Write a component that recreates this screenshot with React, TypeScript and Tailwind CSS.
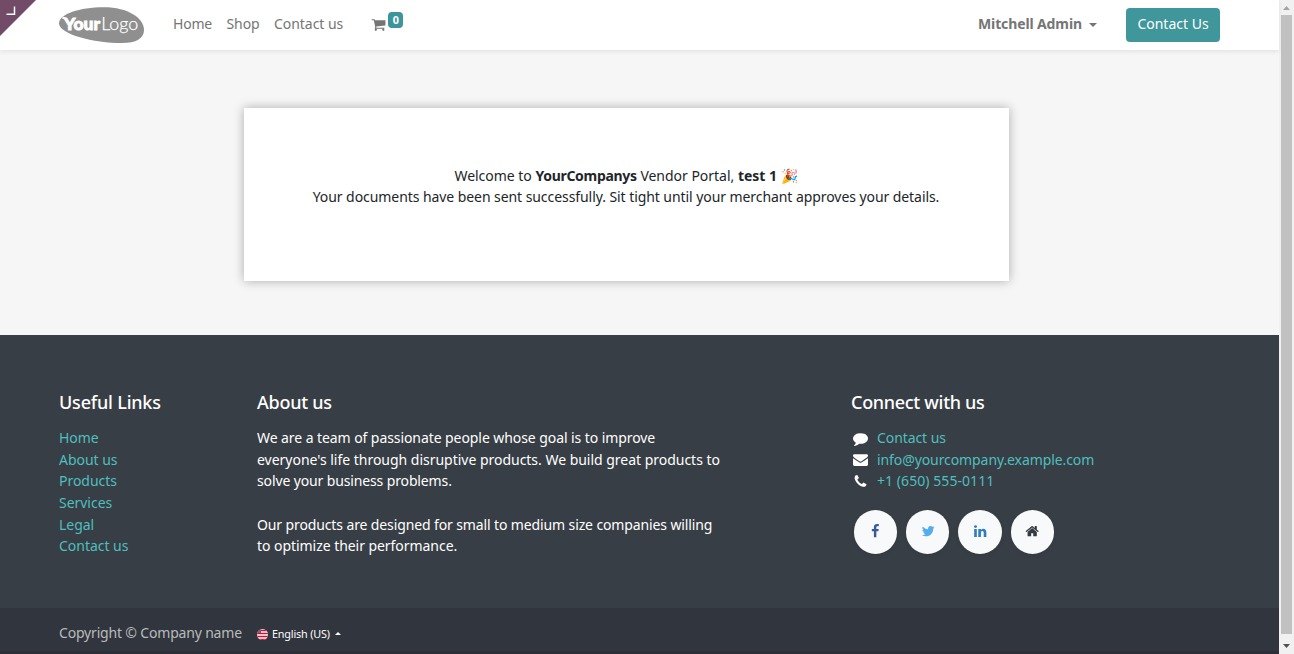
import type { ReactNode } from "react";

const ICONS = {
  cart: "M704 1536q0 52-38 90t-90 38-90-38-38-90 38-90 90-38 90 38 38 90zm896 0q0 52-38 90t-90 38-90-38-38-90 38-90 90-38 90 38 38 90zm128-1088v512q0 24-16.5 42.5t-40.5 21.5l-1044 122q13 60 13 70 0 16-24 64h920q26 0 45 19t19 45-19 45-45 19h-1024q-26 0-45-19t-19-45q0-11 8-31.5t16-36 21.5-40 15.5-29.5l-177-823h-204q-26 0-45-19t-19-45 19-45 45-19h256q16 0 28.5 6.5t19.5 15.5 13 24.5 8 26 5.5 29.5 4.5 26h1201q26 0 45 19t19 45z",
  comment: "M1792 896q0 174-120 321.5t-326 233-450 85.5q-70 0-145-8-198 175-460 242-49 14-114 22-17 2-30.5-9t-17.5-29v-1q-3-4-.5-12t2-10 4.5-9.5l6-9 7-8.5 8-9q7-8 31-34.5t34.5-38 31-39.5 32.5-51 27-59 26-76q-157-89-247.5-220t-90.5-281q0-130 71-248.5t191-204.5 286-136.5 348-50.5q244 0 450 85.5t326 233 120 321.5z",
  envelope: "M1792 710v794q0 66-47 113t-113 47h-1472q-66 0-113-47t-47-113v-794q44 49 101 87 362 246 497 345 57 42 92.5 65.5t94.5 48 110 24.5h2q51 0 110-24.5t94.5-48 92.5-65.5q170-123 498-345 57-39 100-87zm0-294q0 79-49 151t-122 123q-376 261-468 325-10 7-42.5 31t-54 38.5-52 32.5-57.5 27-50 9h-2q-23 0-50-9t-57.5-27-52-32.5-54-38.5-42.5-31q-91-64-262-182.5t-205-142.5q-62-42-117-115.5t-55-136.5q0-78 41.5-130t118.5-52h1472q65 0 112.5 47t47.5 113z",
  phone: "M1600 1240q0 27-10 70.5t-21 68.5q-21 50-122 106-94 51-186 51-27 0-53-3.5t-57.5-12.5-47-14.5-55.5-20.5-49-18q-98-35-175-83-127-79-264-216t-216-264q-48-77-83-175-3-9-18-49t-20.5-55.5-14.5-47-12.5-57.5-3.5-53q0-92 51-186 56-101 106-122 25-11 68.5-21t70.5-10q14 0 21 3 18 6 53 76 11 19 30 54t35 63.5 31 53.5q3 4 17.5 25t21.5 35.5 7 28.5q0 20-28.5 50t-62 55-62 53-28.5 46q0 9 5 22.5t8.5 20.5 14 24 11.5 19q76 137 174 235t235 174q2 1 19 11.5t24 14 20.5 8.5 22.5 5q18 0 46-28.5t53-62 55-62 50-28.5q14 0 28.5 7t35.5 21.5 25 17.5q25 15 53.5 31t63.5 35 54 30q70 35 76 53 3 7 3 21z",
  facebook: "M1343 12v264h-157q-86 0-116 36t-30 108v189h293l-39 296h-254v759h-306v-759h-255v-296h255v-218q0-186 104-288.5t277-102.5q147 0 228 12z",
  twitter: "M1684 408q-67 98-162 167 1 14 1 42 0 130-38 259.5t-115.5 248.5-184.5 210.5-258 146-323 54.5q-271 0-496-145 35 4 78 4 225 0 401-138-105-2-188-64.5t-114-159.5q33 5 61 5 43 0 85-11-112-23-185.5-111.5t-73.5-205.5v-4q68 38 146 41-66-44-105-115t-39-154q0-88 44-163 121 149 294.5 238.5t371.5 99.5q-8-38-8-74 0-134 94.5-228.5t228.5-94.5q140 0 236 102 109-21 205-78-37 115-142 178 93-10 186-50z",
  linkedin: "M477 625v991h-330v-991h330zm21-306q1 73-50.5 122t-135.5 49h-2q-82 0-132-49t-50-122q0-74 51.5-122.5t134.5-48.5 133 48.5 51 122.5zm1166 729v568h-329v-530q0-105-40.5-164.5t-126.5-59.5q-63 0-105.5 34.5t-63.5 85.5q-11 30-11 81v553h-329q2-399 2-647t-1-296l-1-48h329v144h-2q20-32 41-56t56.5-52 87-43.5 114.5-15.5q171 0 275 113.5t104 332.5z",
  home: "M1472 992v480q0 26-19 45t-45 19h-384v-384h-256v384h-384q-26 0-45-19t-19-45v-480q0-1 .5-3t.5-3l575-474 575 474q1 2 1 6zm223-69l-62 74q-8 9-21 11h-3q-13 0-21-7l-692-577-692 577q-12 8-24 7-13-2-21-11l-62-74q-8-10-7-23.5t11-21.5l719-599q32-26 76-26t76 26l244 204v-195q0-14 9-23t23-9h192q14 0 23 9t9 23v408l219 182q10 8 11 21.5t-7 23.5z",
};

function Icon({ name, className }: { name: keyof typeof ICONS; className: string }) {
  return (
    <svg viewBox="0 0 1792 1792" fill="currentColor" className={className}>
      <path d={ICONS[name]} />
    </svg>
  );
}

function Logo() {
  return (
    <svg width="86" height="37" viewBox="0 0 86 37" className="block shrink-0">
      <path d="M0 16C.5 7 20 .2 45 .2 69 .2 85 11 85 23c0 8.5-8 13-22 13C34 36-.5 27 0 16z" fill="#8f8f8f" />
      <path d="M3.5 10.5l4 1.5" stroke="#fff" strokeWidth="2" />
      <text x="5" y="22.8" textLength="36" lengthAdjust="spacingAndGlyphs" fill="#fff" stroke="#fff" strokeWidth=".9" className="font-['Lato'] text-[17.5px] font-black">Your</text>
      <text x="42.2" y="22.8" textLength="37" lengthAdjust="spacingAndGlyphs" fill="#fff" stroke="#fff" strokeWidth=".25" className="font-['Lato'] text-[17.5px] font-light">Logo</text>
    </svg>
  );
}

function Social({ children }: { children: ReactNode }) {
  return (
    <a className="flex size-[43.2px] items-center justify-center rounded-full bg-[#f8f9fa] pb-[2px] shadow-[0_2px_4px_rgba(0,0,0,0.08)]">
      {children}
    </a>
  );
}

const LINKS = ["Home", "About us", "Products", "Services", "Legal", "Contact us"];

export default function App() {
  return (
    <div className="flex h-[654px] w-[1294px] overflow-hidden bg-[#f6f6f6] font-['Noto_Sans',sans-serif] text-[14px] leading-[21.6px] whitespace-nowrap">
      <div className="relative flex w-[1279px] flex-col">
        <header className="z-10 flex h-[50px] shrink-0 items-center bg-white pl-[59px] text-[#757575] shadow-[0_2px_4px_rgba(0,0,0,0.075)]">
          <Logo />
          <nav className="-mt-[2px] ml-[28px] flex items-center">
            <a className="w-[53.5px] tracking-[-0.2px]">Home</a>
            <a className="w-[47.5px] tracking-[-0.1px]">Shop</a>
            <a className="w-[97px] tracking-[-0.05px]">Contact us</a>
            <Icon name="cart" className="size-[15px]" />
            <span className="mb-[8px] ml-[2.4px] flex h-[16px] w-[15px] items-center justify-center rounded-[4px] bg-[#3d959b] text-[10.8px] leading-none font-bold text-white">0</span>
          </nav>
          <div className="-mt-[2px] ml-auto flex items-center font-bold">
            <span className="w-[111px] tracking-[-0.12px]">Mitchell Admin</span>
            <svg width="8" height="4" className="mt-[1px]"><path d="M0 0h8l-4 4z" fill="#757575" /></svg>
          </div>
          <a className="mr-[59px] ml-[29px] flex h-[34px] w-[94px] items-center justify-center rounded-[4px] bg-[#3f969b] pb-[2px] text-white">Contact Us</a>
        </header>
        <svg width="37" height="37" className="absolute top-0 left-0 z-20">
          <path d="M0 0h36L0 36z" fill="#714b67" />
          <path d="M6.5 14.2h8V6.5" fill="none" stroke="#fff" strokeWidth="1.5" />
        </svg>

        <main className="flex h-[285px] shrink-0 pt-[58px] pl-[244px]">
          <section className="h-[173px] w-[765px] bg-white pt-[56.6px] text-center text-[#212529] shadow-[0_0_10px_rgba(0,0,0,0.3)]">
            <p className="pr-[1px] tracking-[-0.02px]">Welcome to <b className="tracking-[-0.3px]">YourCompanys</b> Vendor Portal, <b>test 1</b> 🎉</p>
            <p className="pr-[1px] tracking-[-0.07px]">Your documents have been sent successfully. Sit tight until your merchant approves your details.</p>
          </section>
        </main>

        <footer className="flex h-[273px] shrink-0 bg-[#383e45] pt-[57px] pl-[59px] text-white">
          <div className="w-[198px]">
            <h5 className="mb-[13.7px] text-[18px] font-medium tracking-[-0.2px]">Useful Links</h5>
            <ul className="text-[#4fbfbf]">
              {LINKS.map((l) => <li key={l} className="tracking-[-0.03px]">{l}</li>)}
            </ul>
          </div>
          <div className="w-[594px]">
            <h5 className="mb-[13.7px] text-[18px] font-medium tracking-[-0.25px]">About us</h5>
            <p className="tracking-[-0.075px]">We are a team of passionate people whose goal is to improve</p>
            <p className="tracking-[-0.02px]">everyone's life through disruptive products. We build great products to</p>
            <p className="tracking-[-0.13px]">solve your business problems.</p>
            <p className="mt-[21.6px] tracking-[-0.12px]">Our products are designed for small to medium size companies willing</p>
            <p className="tracking-[-0.05px]">to optimize their performance.</p>
          </div>
          <div>
            <h5 className="mb-[13.7px] text-[18px] font-medium tracking-[-0.3px]">Connect with us</h5>
            <ul className="text-[#4fbfbf]">
              <li className="flex items-center tracking-[-0.08px]"><Icon name="comment" className="mr-[9px] ml-[2px] size-[15px] text-white" />Contact us</li>
              <li className="flex items-center tracking-[-0.09px]"><Icon name="envelope" className="mr-[9px] ml-[2px] size-[15px] text-white" />info@yourcompany.example.com</li>
              <li className="flex items-center tracking-[0.06px]"><Icon name="phone" className="mr-[9px] ml-[2px] size-[15px] text-white" />+1 (650) 555-0111</li>
            </ul>
            <div className="mt-[18.3px] ml-[3px] flex gap-[9px]">
              <Social><Icon name="facebook" className="size-[14.4px] text-[#3b5998]" /></Social>
              <Social><Icon name="twitter" className="size-[14.4px] text-[#55acee]" /></Social>
              <Social><Icon name="linkedin" className="size-[14.4px] text-[#2f7dc0]" /></Social>
              <Social><Icon name="home" className="size-[14.4px] text-[#343a40]" /></Social>
            </div>
          </div>
        </footer>

        <div className="flex h-[46px] shrink-0 items-center border-b-[3px] border-[#2c2f38] bg-[#31353d] pt-[6px] pl-[59px]">
          <span className="w-[198px] tracking-[-0.18px] text-[#b9bbbe]">Copyright © Company name</span>
          <svg width="11" height="11" viewBox="0 0 11 11" className="mt-[3px] mr-[4px]">
            <clipPath id="flag"><circle cx="5.5" cy="5.5" r="5.5" /></clipPath>
            <g clipPath="url(#flag)">
              <path fill="#fff" d="M0 0h11v11H0z" />
              <path d="M0 1.5h11M0 4.5h11M0 7.5h11M0 10.5h11" stroke="#d0102e" strokeWidth="1.5" />
              <path fill="#6c6580" d="M0 0h4v4H0z" />
            </g>
          </svg>
          <span className="mt-[2px] w-[63px] text-[10.8px] tracking-[-0.17px] text-white">English (US)</span>
          <svg width="6" height="3" className="mt-[1px]"><path d="M0 3h6L3 0z" fill="#fff" /></svg>
        </div>
      </div>

      <div className="flex w-[15px] flex-col items-center justify-between bg-[#f1f1f1]">
        <svg width="15" height="15"><path d="M4 10h7L7.5 6z" fill="#a3a3a3" /></svg>
        <div className="w-[11px] flex-1 bg-[#c1c1c1]" />
        <svg width="15" height="20"><path d="M4 10h7l-3.5 4z" fill="#505050" /></svg>
      </div>
    </div>
  );
}
